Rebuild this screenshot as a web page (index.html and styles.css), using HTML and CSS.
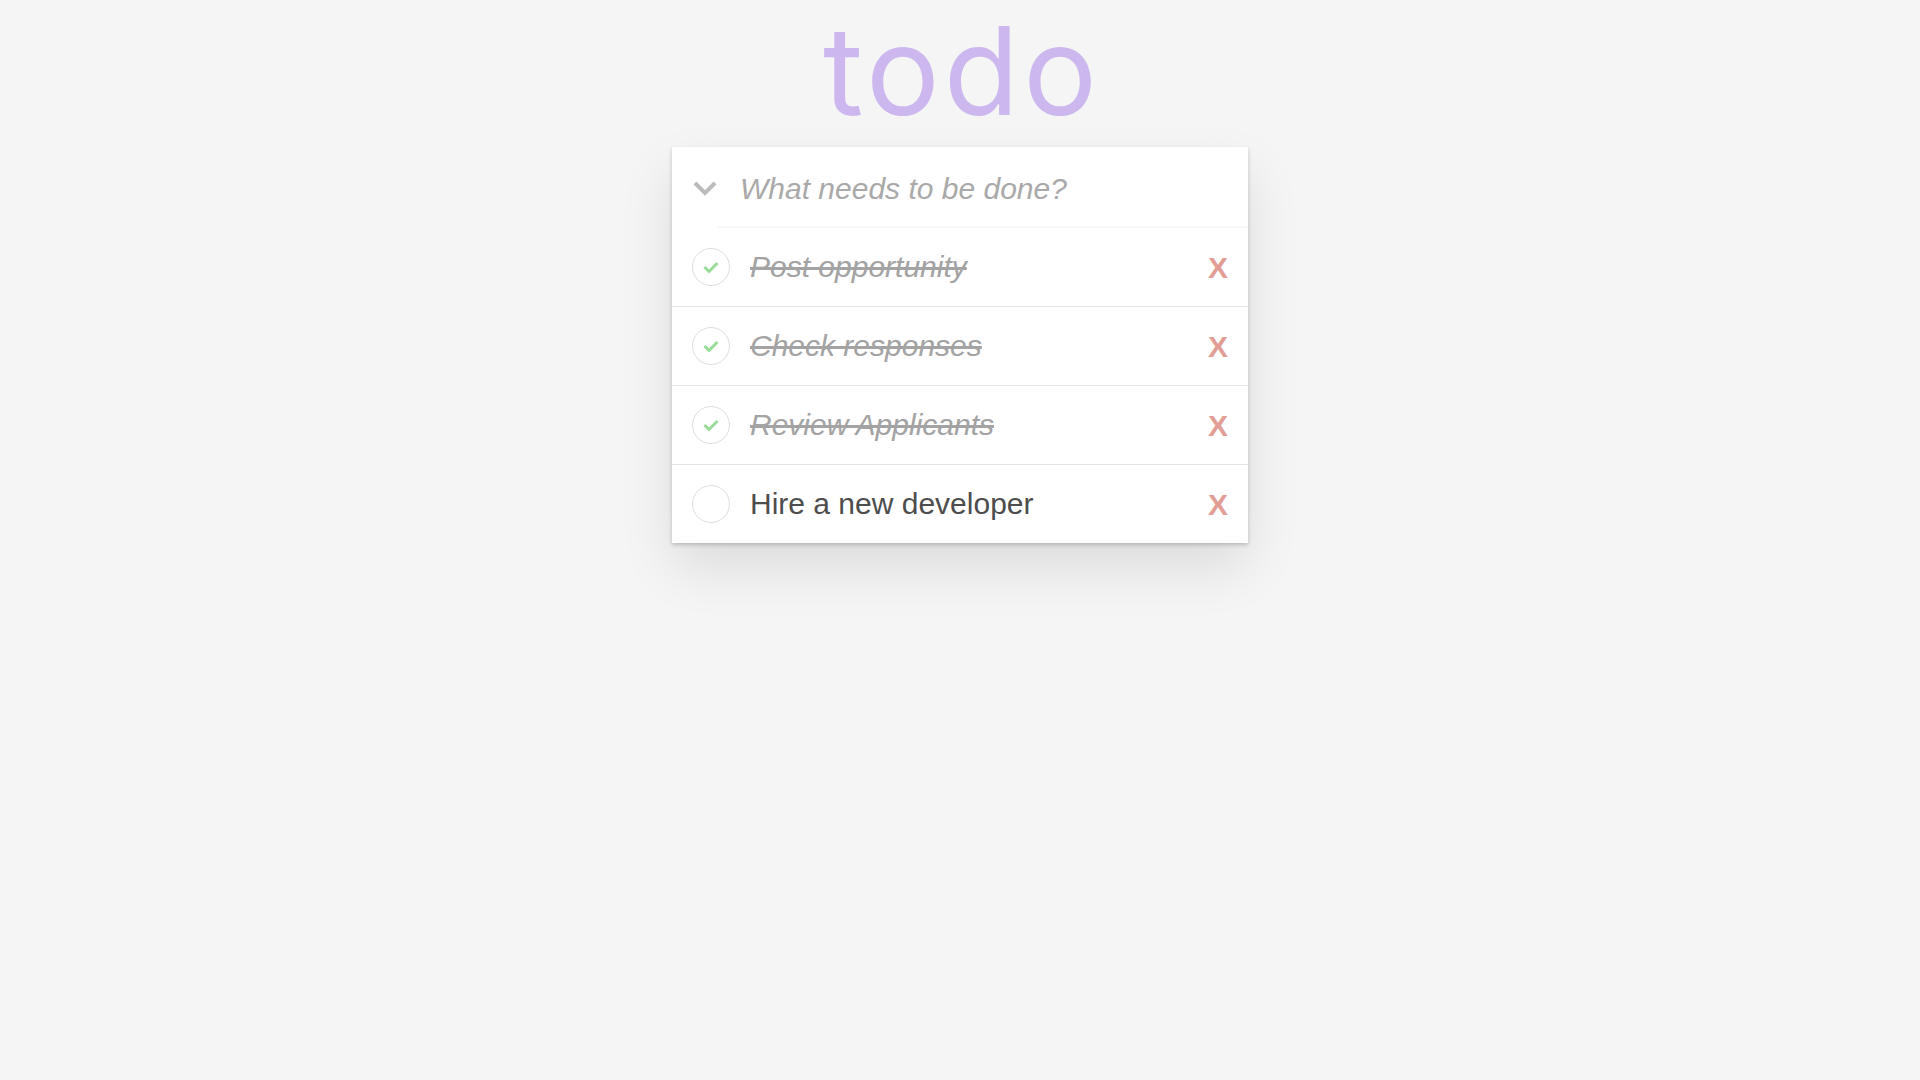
FILE: index.html
```html
<!DOCTYPE html>
<html lang="en">
<head>
<meta charset="utf-8">
<title>todo</title>
<link rel="stylesheet" href="styles.css">
</head>
<body>
<section class="app">
  <h1 class="title">todo</h1>
  <div class="card">
    <div class="entry">
      <label class="toggle-all">
        <svg width="24" height="15" viewBox="0 0 24 15"><path d="M2 2 L12 12 L22 2" fill="none" stroke="#bcbcbc" stroke-width="4"/></svg>
      </label>
      <input class="new-todo" type="text" placeholder="What needs to be done?">
    </div>
    <ul class="list">
      <li class="item done">
        <span class="check"><svg width="40" height="40" viewBox="0 0 40 40"><circle cx="20" cy="20" r="18.5" fill="none" stroke="#dedede" stroke-width="1"/><path d="M13.5 20 L18 24.5 L26.5 16" fill="none" stroke="#98dc98" stroke-width="3"/></svg></span>
        <span class="label">Post opportunity</span>
        <span class="destroy">X</span>
      </li>
      <li class="item done">
        <span class="check"><svg width="40" height="40" viewBox="0 0 40 40"><circle cx="20" cy="20" r="18.5" fill="none" stroke="#dedede" stroke-width="1"/><path d="M13.5 20 L18 24.5 L26.5 16" fill="none" stroke="#98dc98" stroke-width="3"/></svg></span>
        <span class="label">Check responses</span>
        <span class="destroy">X</span>
      </li>
      <li class="item done">
        <span class="check"><svg width="40" height="40" viewBox="0 0 40 40"><circle cx="20" cy="20" r="18.5" fill="none" stroke="#dedede" stroke-width="1"/><path d="M13.5 20 L18 24.5 L26.5 16" fill="none" stroke="#98dc98" stroke-width="3"/></svg></span>
        <span class="label">Review Applicants</span>
        <span class="destroy">X</span>
      </li>
      <li class="item">
        <span class="check"><svg width="40" height="40" viewBox="0 0 40 40"><circle cx="20" cy="20" r="18.5" fill="none" stroke="#dedede" stroke-width="1"/></svg></span>
        <span class="label">Hire a new developer</span>
        <span class="destroy">X</span>
      </li>
    </ul>
  </div>
</section>
</body>
</html>
```

FILE: styles.css
```css
html, body {
  margin: 0;
  padding: 0;
}
html {
  background: #f5f5f5;
}
body {
  min-height: 100vh;
  background: #f5f5f5;
  font-family: "Liberation Sans", Arial, sans-serif;
  color: #4d4d4d;
}
.app {
  display: flex;
  flex-direction: column;
  align-items: center;
  padding-bottom: 120px;
}
.title {
  margin: 0;
  height: 147px;
  font-family: Inter, Lato, sans-serif;
  font-weight: 400;
  font-size: 123px;
  line-height: 141px;
  color: #ccb8ee;
  letter-spacing: 4px;
  text-indent: 4px;
}
.card {
  position: relative;
  z-index: 1;
  width: 576px;
  background: #fff;
  box-shadow: 0 2px 4px rgba(0, 0, 0, 0.2), 0 25px 50px 0 rgba(0, 0, 0, 0.1);
}
.entry {
  display: flex;
  height: 81px;
}
.toggle-all {
  width: 46px;
  flex: none;
  display: flex;
  align-items: center;
  padding-left: 21px;
  box-sizing: border-box;
  padding-top: 2px;
}
.toggle-all svg {
  display: block;
}
.new-todo {
  flex: 1;
  min-width: 0;
  margin: 0;
  border: none;
  outline: none;
  padding: 3px 16px 0 22px;
  font-family: "Liberation Sans", Arial, sans-serif;
  font-size: 30px;
  color: #4d4d4d;
  background: #fff;
  box-shadow: inset 0 -2px 1px rgba(0, 0, 0, 0.03);
}
.new-todo::placeholder {
  font-style: italic;
  color: #a9a9a9;
}
.list {
  list-style: none;
  margin: 0;
  padding: 0;
}
.item {
  display: flex;
  align-items: center;
  height: 78px;
  border-bottom: 1px solid #e3e3e3;
  padding: 0 20px 0 20px;
  font-size: 30px;
}
.item:last-child {
  border-bottom: none;
}
.check {
  width: 38px;
  height: 38px;
  flex: none;
  display: flex;
  align-items: center;
  justify-content: center;
}
.check svg {
  display: block;
  flex: none;
  width: 40px;
  height: 40px;
}
.label {
  flex: 1;
  margin-left: 20px;
  color: #4d4d4d;
  white-space: nowrap;
}
.done .label {
  font-style: italic;
  color: #a3a3a3;
  text-decoration: line-through;
}
.destroy {
  flex: none;
  font-weight: 700;
  font-size: 30px;
  color: #e29d95;
  padding-top: 2px;
}
```
